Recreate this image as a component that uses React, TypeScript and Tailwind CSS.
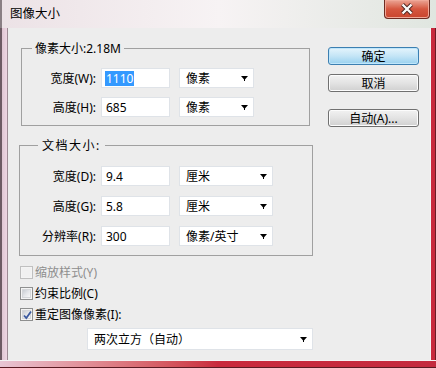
const font = "font-['Noto_Sans','Noto_Sans_CJK_SC',sans-serif]";

function Arrow() {
  return (
    <svg width="7" height="5" viewBox="0 0 7 5" className="shrink-0">
      <path d="M0 0H7L3.5 4Z" fill="#000" />
      <rect x="3" y="3" width="1" height="2" fill="#000" />
    </svg>
  );
}

function TextBox({ value, selected }: { value: string; selected?: boolean }) {
  return (
    <div className="w-[69px] h-[20px] bg-white border border-[#dfe3e8] flex items-center pl-[3px]">
      {selected ? (
        <span className="bg-[#3399ff] text-white leading-[15px] h-[15px] px-[1px]">{value}</span>
      ) : (
        <span className="leading-[15px] px-[1px]">{value}</span>
      )}
    </div>
  );
}

function Select({ value, width }: { value: string; width: string }) {
  return (
    <div className={`${width} h-[20px] bg-white border border-[#dfe3e8] flex items-center pl-[6px] pr-[5px]`}>
      <span className="flex-1 leading-[15px]">{value}</span>
      <Arrow />
    </div>
  );
}

function Row({
  label,
  value,
  unit,
  selectWidth,
  labelWidth,
  selected,
}: {
  label: string;
  value: string;
  unit: string;
  selectWidth: string;
  labelWidth: string;
  selected?: boolean;
}) {
  return (
    <div className="flex items-center h-[20px]">
      <div className={`${labelWidth} text-right pr-[5px] leading-[15px]`}>{label}</div>
      <TextBox value={value} selected={selected} />
      <div className="w-[9px]" />
      <Select value={unit} width={selectWidth} />
    </div>
  );
}

function CheckBox({ checked, disabled }: { checked?: boolean; disabled?: boolean }) {
  return (
    <div
      className={`w-[13px] h-[13px] border p-[1px] ${
        disabled ? "border-[#c0c0c0] bg-[#f4f4f4]" : "border-[#8e8f8f] bg-[#f4f4f4]"
      }`}
    >
      <div
        className={`w-full h-full relative ${
          disabled
            ? "bg-[#f1f1f1]"
            : "bg-gradient-to-br from-[#c9cdd3] via-[#e4e6e9] to-[#f7f7f7] border border-[#d4d6d9]"
        }`}
      >
        {checked && (
          <svg width="11" height="11" viewBox="0 0 11 11" className="absolute -left-[1px] -top-[1px]">
            <path d="M2 5.5L4.3 8L9 1.5" stroke="#3b5aa0" strokeWidth="1.8" fill="none" />
          </svg>
        )}
      </div>
    </div>
  );
}

function Button({ label, primary }: { label: string; primary?: boolean }) {
  return (
    <div
      className={`w-[91px] h-[18px] rounded-[3px] border flex items-center justify-center leading-[15px] ${
        primary
          ? "border-[#3c7fb1] bg-gradient-to-b from-[#e5f4fc] via-[#c4e5f6] to-[#98d1ef] shadow-[inset_0_0_0_1px_#bfe6fb]"
          : "border-[#707070] bg-gradient-to-b from-[#f2f2f2] via-[#e3e3e3] to-[#d0d0d0] shadow-[inset_0_0_0_1px_#fcfcfc]"
      }`}
    >
      {label}
    </div>
  );
}

export default function App() {
  return (
    <div className={`w-[436px] h-[368px] flex flex-col overflow-hidden text-[12px] text-black ${font}`}>
      {/* title bar */}
      <div className="h-[28px] flex items-start bg-gradient-to-r from-[#ece2e6] via-[#f7f3f4] to-[#e0e6e0] border-l-2 border-[#8a7f84]">
        <span className="ml-[8px] mt-[6px] leading-[16px] text-[12.5px]">图像大小</span>
        <div className="ml-auto mr-[6px] w-[46px] h-[19px] rounded-b-[4px] border border-t-0 border-[#6d2b22] bg-gradient-to-b from-[#eaa495] via-[#d5563f] to-[#c9452e] flex items-center justify-center shadow-[inset_0_0_0_1px_#f0a898]">
          <svg width="14" height="12" viewBox="0 0 14 12">
            <path d="M2.5 1.5L11.5 10.5M11.5 1.5L2.5 10.5" stroke="#4a2520" strokeWidth="4.2" />
            <path d="M2.5 1.5L11.5 10.5M11.5 1.5L2.5 10.5" stroke="#fafafa" strokeWidth="2.4" />
          </svg>
        </div>
      </div>

      <div className="flex flex-1">
        <div className="w-[8px] border-l-2 border-[#6d5a63] bg-gradient-to-r from-[#e0c6d3] to-[#f1d9e6] shadow-[inset_-1px_0_0_#9e8a94]" />

        {/* client area */}
        <div className="w-[422px] bg-[#ededed] flex">
          <div className="w-[304px] flex flex-col">
            {/* 像素大小 */}
            <div className="relative ml-[13px] mt-[20px] w-[289px] h-[78px] border border-[#a0a0a0] pt-[19px] flex flex-col gap-[9px]">
              <span className="absolute -top-[8px] left-[10px] px-[3px] bg-[#ededed] leading-[15px]">
                像素大小:2.18M
              </span>
              <Row label="宽度(W):" value="1110" unit="像素" selectWidth="w-[75px]" labelWidth="w-[79px]" selected />
              <Row label="高度(H):" value="685" unit="像素" selectWidth="w-[75px]" labelWidth="w-[79px]" />
            </div>

            {/* 文档大小 */}
            <div className="relative ml-[11px] mt-[19px] w-[294px] h-[111px] border border-[#a0a0a0] pt-[20px] flex flex-col gap-[10px]">
              <span className="absolute -top-[8px] left-[18px] px-[4px] bg-[#ededed] leading-[15px] tracking-[1.5px]">
                文档大小:
              </span>
              <Row label="宽度(D):" value="9.4" unit="厘米" selectWidth="w-[94px]" labelWidth="w-[81px]" />
              <Row label="高度(G):" value="5.8" unit="厘米" selectWidth="w-[94px]" labelWidth="w-[81px]" />
              <Row label="分辨率(R):" value="300" unit="像素/英寸" selectWidth="w-[94px]" labelWidth="w-[81px]" />
            </div>

            {/* checkboxes */}
            <div className="ml-[12px] mt-[6px] flex flex-col">
              <div className="h-[21px] flex items-center gap-[2px] text-[#8d8d8d]">
                <CheckBox disabled />
                <span className="leading-[15px]">缩放样式(Y)</span>
              </div>
              <div className="h-[21px] flex items-center gap-[2px]">
                <CheckBox />
                <span className="leading-[15px]">约束比例(C)</span>
              </div>
              <div className="h-[21px] flex items-center gap-[2px]">
                <CheckBox checked />
                <span className="leading-[15px]">重定图像像素(I):</span>
              </div>
            </div>

            <div className="ml-[79px] mt-[3px] w-[226px] h-[22px] bg-white border border-[#dfe3e8] flex items-center pl-[6px] pr-[5px]">
              <span className="flex-1 leading-[15px]">两次立方（自动）</span>
              <Arrow />
            </div>
          </div>

          {/* buttons */}
          <div className="pl-[16px] pt-[19px] flex flex-col">
            <Button label="确定" primary />
            <div className="h-[9px]" />
            <Button label="取消" />
            <div className="h-[17px]" />
            <Button label="自动(A)..." />
          </div>
        </div>

        <div className="w-[6px] bg-[#c8283c] border-r border-[#6a1a24] shadow-[inset_1px_0_0_#f4f4f4]" />
      </div>

      <div className="h-[8px] bg-gradient-to-r from-[#e8c5d4] via-[#c92a3d] to-[#c42b3f] shadow-[inset_0_1px_0_#f4f4f4] border-b border-[#5a1a22]" />
    </div>
  );
}
